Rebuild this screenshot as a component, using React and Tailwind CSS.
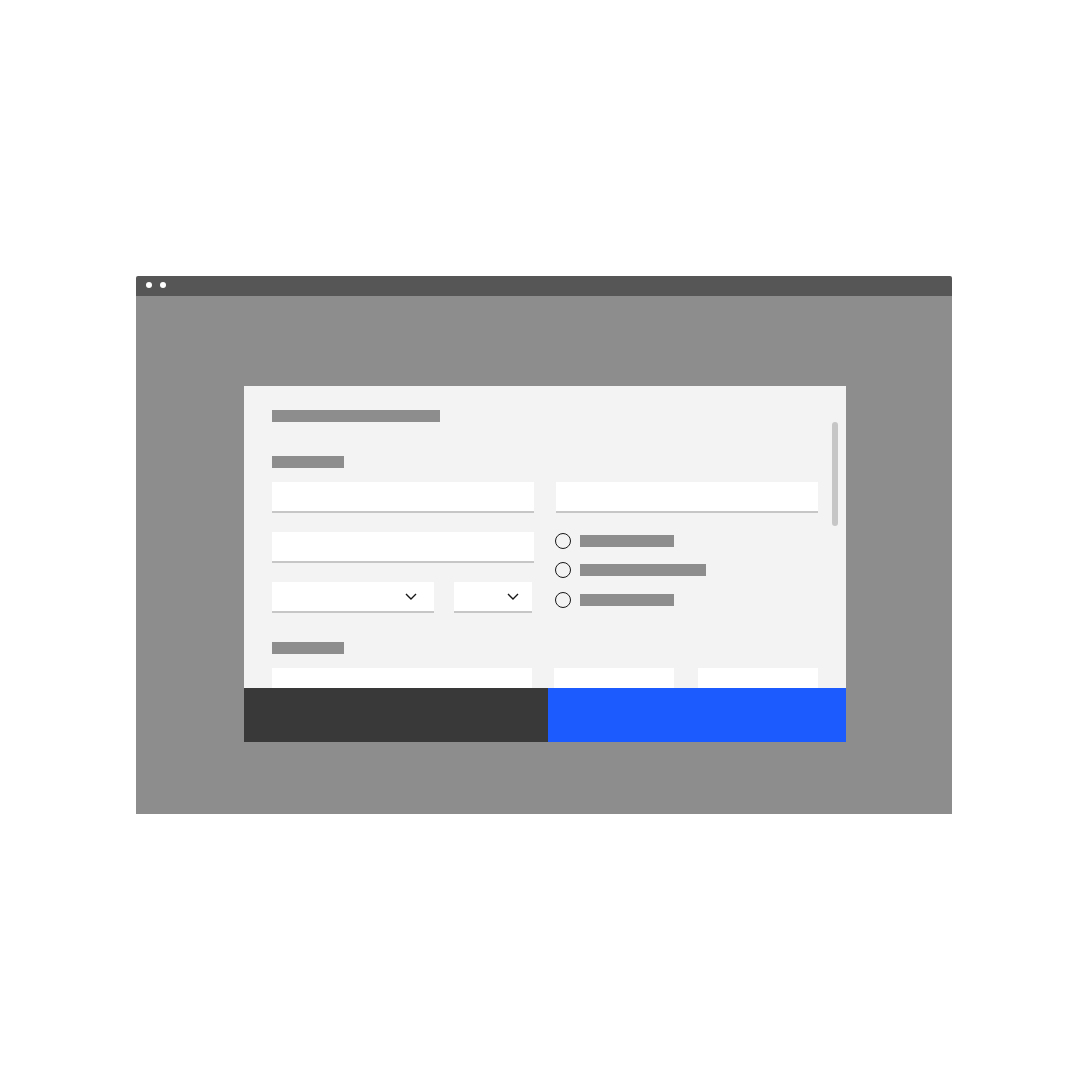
import React from 'react';

const Bar = ({ w }) => <div className={`h-3 bg-[#8d8d8d] ${w}`} />;

const Chevron = () => (
  <svg width="12" height="7" viewBox="0 0 12 7" fill="none">
    <path d="M1 1l5 5 5-5" stroke="#161616" strokeWidth="1.4" />
  </svg>
);

const Field = ({ w }) => (
  <div className={`h-[31px] bg-white border-b-2 border-[#c6c6c6] ${w}`} />
);

const Select = ({ w, pr }) => (
  <div className={`h-[31px] bg-white border-b-2 border-[#c6c6c6] flex items-center justify-end ${w} ${pr}`}>
    <Chevron />
  </div>
);

const Radio = ({ w }) => (
  <div className="flex items-center gap-[9px] h-4">
    <div className="w-4 h-4 rounded-full border border-[#161616]" />
    <Bar w={w} />
  </div>
);

export default function App() {
  return (
    <div className="min-h-screen bg-white pt-[276px]" style={{ fontFamily: '"Liberation Sans", sans-serif' }}>
      <div className="mx-auto w-[816px]">
        {/* window chrome */}
        <div className="h-5 bg-[#565656] rounded-t-[2px] flex items-center gap-2 pl-[10px] pb-[2px]">
          <span className="w-[6px] h-[6px] rounded-full bg-white" />
          <span className="w-[6px] h-[6px] rounded-full bg-white" />
        </div>

        <div className="h-[518px] bg-[#8d8d8d] pt-[90px] pl-[108px]">
          {/* modal */}
          <div className="w-[602px] h-[356px] bg-[#f3f3f3] flex flex-col">
            <div className="relative flex-1 overflow-hidden pl-7 pt-6">
              <Bar w="w-[168px]" />
              <div className="mt-[34px]">
                <Bar w="w-[72px]" />
              </div>

              <div className="mt-[14px] flex gap-[22px]">
                <div className="w-[262px] flex flex-col">
                  <Field w="w-[262px]" />
                  <div className="mt-[19px]">
                    <Field w="w-[262px]" />
                  </div>
                  <div className="mt-[19px] flex gap-5">
                    <Select w="w-[162px]" pr="pr-[17px]" />
                    <Select w="w-[78px]" pr="pr-[13px]" />
                  </div>
                </div>

                <div className="w-[262px] flex flex-col">
                  <Field w="w-[262px]" />
                  <div className="mt-5 -ml-px flex flex-col">
                    <Radio w="w-[94px]" />
                    <div className="mt-[13px]">
                      <Radio w="w-[126px]" />
                    </div>
                    <div className="mt-[14px]">
                      <Radio w="w-[94px]" />
                    </div>
                  </div>
                </div>
              </div>

              <div className="mt-[29px]">
                <Bar w="w-[72px]" />
              </div>
              <div className="mt-[14px] flex">
                <Field w="w-[260px]" />
                <div className="ml-[22px]">
                  <Field w="w-[120px]" />
                </div>
                <div className="ml-6">
                  <Field w="w-[120px]" />
                </div>
              </div>

              {/* scrollbar */}
              <div className="absolute left-[588px] top-9 w-[6px] h-[104px] rounded-full bg-[#c6c6c6]" />
            </div>

            <div className="h-[54px] flex">
              <div className="w-[304px] bg-[#393939]" />
              <div className="flex-1 bg-[#1c5cff]" />
            </div>
          </div>
        </div>
      </div>
    </div>
  );
}
